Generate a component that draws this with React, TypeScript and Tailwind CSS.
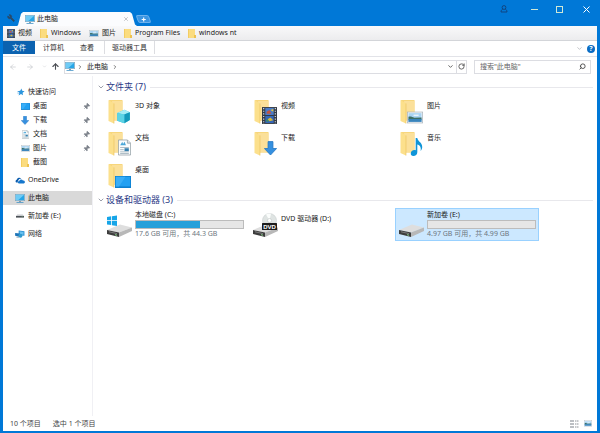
import type { ReactNode } from 'react';
import { ArrowLeft, ArrowRight, ArrowUp, ChevronDown, ChevronRight, Pin, RotateCw, Search, Wrench, X } from 'lucide-react';

type IconProps = { className?: string };

function MonitorIcon({ className }: IconProps) {
  return (
    <svg viewBox="0 0 20 18" className={className} aria-hidden="true">
      <rect x="0.5" y="0.5" width="19" height="13" fill="#d7e6ee" stroke="#7f97a6" />
      <rect x="1.5" y="1.5" width="17" height="11" fill="#27a5e6" />
      <path d="M1.5 1.5h17L6 12.5H1.5z" fill="#6fcbf5" />
      <path d="M8 14h4v2H8z" fill="#8a9ba6" />
      <path d="M3 16h14v1.5H3z" fill="#3c8fc4" />
    </svg>
  );
}

function SmallFolderIcon({ className }: IconProps) {
  return (
    <svg viewBox="0 0 16 18" className={className} aria-hidden="true">
      <path d="M0 0h14v13l2 2v3H0z" fill="#fbdc7f" />
      <path d="M0 0h2v18H0z" fill="#f3cd63" />
      <path d="M12 12h4v6h-4z" fill="#edc250" />
    </svg>
  );
}

function FilmIcon({ className }: IconProps) {
  return (
    <svg viewBox="0 0 16 18" className={className} aria-hidden="true">
      <path d="M0 0h16v18H0z" fill="#343b45" />
      <path d="M3.5 1h9v7.5h-9z" fill="#4a7cc9" />
      <path d="M3.5 9.5h9V17h-9z" fill="#3566b8" />
      <path d="M5 5l3-2 2 4H5z" fill="#c2543f" />
      <path d="M9 3l3-1v3z" fill="#e2c33a" />
      <path d="M6 13l3-2 3 3-4 1z" fill="#d7b83b" />
      <path d="M4 15l2-3 1 4z" fill="#3f8f5a" />
      <path d="M1.8 1v17M14.2 1v17" stroke="#dfe4ea" strokeWidth="1.2" strokeDasharray="1.3 1.5" />
    </svg>
  );
}

function PictureIcon({ className }: IconProps) {
  return (
    <svg viewBox="0 0 22 16" className={className} aria-hidden="true">
      <rect x="0.5" y="0.5" width="21" height="15" fill="#f7fafc" stroke="#a9b4bc" />
      <path d="M2 2h18v12H2z" fill="#a9d3f2" />
      <path d="M2 7c3-1 5 0 8 1.500l10-.5v3H2z" fill="#3d6f63" />
      <path d="M2 10h18v4H2z" fill="#3984bb" />
      <path d="M9 4h7v2H9z" fill="#e9f4fb" />
    </svg>
  );
}

function DocumentIcon({ className }: IconProps) {
  return (
    <svg viewBox="0 0 18 22" className={className} aria-hidden="true">
      <path d="M0.6.6h12.5l4.3 4.3v16.5H.6z" fill="#fafcfd" stroke="#8b989f" />
      <path d="M13 .6V5h4.4" fill="#dde4e8" stroke="#8b989f" />
      <path d="M3 8l3-5 1 3 2-3 2 5z" fill="#4aa6d8" />
      <path d="M3 11h12M3 14h5M3 17h12M3 19.3h12" stroke="#8fa4af" />
      <path d="M9 12h6v4H9z" fill="#357fae" />
    </svg>
  );
}

function DesktopIcon({ className }: IconProps) {
  return (
    <svg viewBox="0 0 20 15" className={className} aria-hidden="true">
      <path d="M0 0h20v15H0z" fill="#0c7fcf" />
      <path d="M1 1h18v12H1z" fill="#22a0f2" />
      <path d="M1 1h12L5 13H1z" fill="#3aaef7" />
    </svg>
  );
}

function DownArrowIcon({ className }: IconProps) {
  return (
    <svg viewBox="0 0 16 18" className={className} aria-hidden="true">
      <path d="M5 .5h6V9h4.5L8 17 .5 9H5z" fill="#3590e0" stroke="#2578c4" />
    </svg>
  );
}

function MusicIcon({ className }: IconProps) {
  return (
    <svg viewBox="0 0 14 22" className={className} aria-hidden="true">
      <path d="M6 0h2c0 4 6 5 6 11 0 2-1 4-2 5 1-5-1-7-4-8v9c0 3-2 5-5 5-2 0-3-1-3-3 0-3 3-5 6-4z" fill="#0f95d8" />
    </svg>
  );
}

function CubeIcon({ className }: IconProps) {
  return (
    <svg viewBox="0 0 18 19" className={className} aria-hidden="true">
      <path d="M1 5l9-4 7 3v10l-7 4-9-3z" fill="#38bfd8" />
      <path d="M1 5l9-4 7 3-7 3z" fill="#a5ecf5" />
      <path d="M10 7l7-3v10l-7 4z" fill="#1499ba" />
      <path d="M1 5l9 2v11l-9-3z" fill="#5cd3e5" />
    </svg>
  );
}

function StarIcon({ className }: IconProps) {
  return (
    <svg viewBox="0 0 20 20" className={className} aria-hidden="true">
      <path d="M11 1l2 6 6 1-5 4 1 6-5-3-6 4 2-7-5-4 7-1z" fill="#2b95dd" />
      <path d="M0 10h4M1 14h4" stroke="#7dbcec" strokeWidth="1.4" />
    </svg>
  );
}

function CloudIcon({ className }: IconProps) {
  return (
    <svg viewBox="0 0 24 16" className={className} aria-hidden="true">
      <path d="M3 13a4 4 0 0 1 1-7 6 6 0 0 1 11-2 5 5 0 0 0-7 4 4 4 0 0 0-1 5z" fill="#0b5cad" />
      <path d="M10 15a3 3 0 0 1 0-6 5 5 0 0 1 9-1 3.6 3.6 0 0 1 2 7z" fill="#1576cc" />
    </svg>
  );
}

function NetworkIcon({ className }: IconProps) {
  return (
    <svg viewBox="0 0 22 18" className={className} aria-hidden="true">
      <path d="M8 1l13 2v10L8 12z" fill="#2a8fd3" />
      <path d="M10 3l9 1.500v6L10 10z" fill="#6ac1ef" />
      <path d="M0 7l11 1v7L0 13z" fill="#1d74b8" />
      <circle cx="12" cy="13" r="4.500" fill="#2f9bcf" />
      <path d="M3 16h6" stroke="#51718a" strokeWidth="1.5" />
    </svg>
  );
}

function FlatDriveIcon({ className }: IconProps) {
  return (
    <svg viewBox="0 0 20 10" className={className} aria-hidden="true">
      <path d="M3 1h14l3 4H0z" fill="#c9cccf" />
      <path d="M0 5h20v4H0z" fill="#4b5056" />
      <path d="M14 6.5h3" stroke="#8fe08a" />
    </svg>
  );
}

function DriveIcon({ className, children }: IconProps & { children?: ReactNode }) {
  return (
    <svg viewBox="0 0 25 24" className={className} aria-hidden="true">
      <path d="M0 17l13-5.500 12 3L12 19.500z" fill="#dedede" />
      <path d="M12 19.500l13-5V18l-13 6z" fill="#b8b8b8" />
      <path d="M0 17l12 2.500V24L0 21z" fill="#3d3d3d" />
      <path d="M2 18.800l8 1.800" stroke="#7b7b7b" />
      <path d="M8 21.700l2 .5" stroke="#8ad48a" />
      {children}
    </svg>
  );
}

function WindowsDriveIcon({ className }: IconProps) {
  return (
    <DriveIcon className={className}>
      <path d="M0 4l4.200-.7v4H0zM5 3.200l5-.7v4.800H5zM0 8.100h4.200v4L0 11.500zM5 8.100h5v4.900l-5-.7z" fill="#16a5e8" />
    </DriveIcon>
  );
}

function DvdDriveIcon({ className }: IconProps) {
  return (
    <DriveIcon className={className}>
      <circle cx="16.500" cy="7.500" r="7" fill="#dfe4e3" stroke="#c3c9c8" strokeWidth="0.500" />
      <path d="M16.500 7.500L13 1.500a7 7 0 0 1 5-.8z" fill="#fbfdfc" />
      <circle cx="16.500" cy="7.500" r="2" fill="#fff" stroke="#b5bbba" strokeWidth="0.500" />
      <rect x="9" y="10" width="15" height="7" rx="0.500" fill="#1c1c1c" />
      <text x="16.500" y="15.700" textAnchor="middle" fontSize="6" fontWeight="700" fill="#fff" fontFamily="Liberation Sans, sans-serif">
        DVD
      </text>
    </DriveIcon>
  );
}

function FolderIcon({ children }: { children: ReactNode }) {
  return (
    <span className="relative h-6 w-6 shrink-0">
      <svg viewBox="0 0 24 24" className="h-6 w-6" aria-hidden="true">
        <path d="M2 0h13.500v20.500H4z" fill="#f7d67c" />
        <path d="M5 1h10.500v19.500H6z" fill="#fbe09a" />
        <path d="M1.500 0l5.500 3.500V23.500L1.500 21z" fill="#fce08c" />
        <path d="M7 3.500V23.500" stroke="#e9bf58" strokeWidth="0.600" />
      </svg>
      {children}
    </span>
  );
}

const bookmarks = [
  { name: '视频', icon: <FilmIcon className="h-[9px] w-2" /> },
  { name: 'Windows', icon: <SmallFolderIcon className="h-[9px] w-2" /> },
  { name: '图片', icon: <PictureIcon className="h-[7px] w-[10px]" /> },
  { name: 'Program Files', icon: <SmallFolderIcon className="h-[9px] w-2" /> },
  { name: 'windows nt', icon: <SmallFolderIcon className="h-[9px] w-2" /> },
];

const quickAccess = [
  { name: '桌面', pinned: true, icon: <DesktopIcon className="h-[7px] w-[9px]" /> },
  { name: '下载', pinned: true, icon: <DownArrowIcon className="h-[9px] w-2" /> },
  { name: '文档', pinned: true, icon: <DocumentIcon className="h-[9px] w-[7px]" /> },
  { name: '图片', pinned: true, icon: <PictureIcon className="h-[7px] w-[9px]" /> },
  { name: '截图', pinned: false, icon: <SmallFolderIcon className="h-[9px] w-2" /> },
];

const places = [
  { name: 'OneDrive', active: false, icon: <CloudIcon className="h-[7px] w-[10px]" /> },
  { name: '此电脑', active: true, icon: <MonitorIcon className="h-[9px] w-[10px]" /> },
  { name: '新加卷 (E:)', active: false, icon: <FlatDriveIcon className="h-1 w-2" /> },
  { name: '网络', active: false, icon: <NetworkIcon className="h-2 w-[10px]" /> },
];

const folders = [
  { name: '3D 对象', icon: <CubeIcon className="absolute right-0 bottom-0 h-[15px] w-[15px]" /> },
  { name: '视频', icon: <FilmIcon className="absolute right-0 bottom-0 h-[17px] w-[15px]" /> },
  { name: '图片', icon: <PictureIcon className="absolute right-0 bottom-0 h-[13px] w-4" /> },
  { name: '文档', icon: <DocumentIcon className="absolute right-0 bottom-0 h-[17px] w-[13px]" /> },
  { name: '下载', icon: <DownArrowIcon className="absolute right-0 bottom-0 h-[15px] w-[13px]" /> },
  { name: '音乐', icon: <MusicIcon className="absolute right-0 bottom-0 h-[18px] w-[13px]" /> },
  { name: '桌面', icon: <DesktopIcon className="absolute right-0 bottom-0 h-3 w-4" /> },
];

const drives = [
  { name: '本地磁盘 (C:)', used: 60, detail: '17.6 GB 可用，共 44.3 GB', icon: <WindowsDriveIcon className="h-6 w-[25px]" /> },
  { name: 'DVD 驱动器 (D:)', icon: <DvdDriveIcon className="h-6 w-[25px]" /> },
  { name: '新加卷 (E:)', used: 0, detail: '4.97 GB 可用，共 4.99 GB', selected: true, icon: <DriveIcon className="h-6 w-[25px]" /> },
];

function SectionHeader({ title }: { title: string }) {
  return (
    <h2 className="flex h-3 items-center text-[9px] leading-3 text-[#2b3a86]">
      <ChevronDown className="mr-[1px] h-2 w-2 text-[#6b7080]" />
      {title}
      <span className="ml-1 h-px flex-1 bg-[#e8e8ec]" />
    </h2>
  );
}

function TitleBar() {
  return (
    <header className="flex h-[26px] shrink-0 items-end pl-1">
      <button type="button" aria-label="设置" className="mb-1 h-2 w-2 text-[#2b4a68]">
        <Wrench className="h-2 w-2 -scale-x-100" fill="currentColor" />
      </button>
      <div className="ml-[2px] flex h-[14px] w-[120px] items-center bg-[#fbfcfe] pr-2 pl-2 [clip-path:polygon(0_100%,1px_94%,4px_12%,6px_0,113px_0,115px_12%,118px_90%,100%_100%)]">
        <MonitorIcon className="h-[9px] w-[10px]" />
        <span className="ml-[2px] flex-1">此电脑</span>
        <button type="button" aria-label="关闭标签页">
          <X className="h-[6px] w-[6px] text-[#8c8f94]" />
        </button>
      </div>
      <button
        type="button"
        aria-label="新标签页"
        className="mb-[3px] flex h-2 w-[13px] skew-x-[20deg] items-center justify-center rounded-[2px] border border-[#6db1ec] bg-[#3b95e2] text-white"
      >
        <svg viewBox="0 0 6 6" className="h-[5px] w-[5px] skew-x-[-20deg]" aria-hidden="true">
          <path d="M3 .5v5M.5 3h5" stroke="currentColor" strokeWidth="1.400" />
        </svg>
      </button>
      <div className="mr-[7px] mb-[13px] ml-auto flex items-center text-[#cfe8d6]">
        <button type="button" aria-label="用户" className="mr-[23px] text-[#123f78]">
          <svg viewBox="0 0 16 16" className="h-2 w-2" fill="none" stroke="currentColor" strokeWidth="1.800" aria-hidden="true">
            <circle cx="8" cy="5" r="3.800" />
            <path d="M5.500 8C3 9.500 2 11.500 2 14h12c0-2.500-1-4.500-3.500-6" />
          </svg>
        </button>
        <button type="button" aria-label="最小化" className="mr-[18px]">
          <svg viewBox="0 0 7 7" className="h-[7px] w-[7px]" aria-hidden="true">
            <path d="M0 3.500h7" stroke="currentColor" />
          </svg>
        </button>
        <button type="button" aria-label="最大化" className="mr-5">
          <svg viewBox="0 0 7 7" className="h-[7px] w-[7px]" aria-hidden="true">
            <rect x="0.500" y="0.500" width="6" height="6" fill="none" stroke="currentColor" />
          </svg>
        </button>
        <button type="button" aria-label="关闭" className="text-white">
          <svg viewBox="0 0 7 7" className="h-[7px] w-[7px]" aria-hidden="true">
            <path d="M.5.5l6 6M6.500.5l-6 6" stroke="currentColor" />
          </svg>
        </button>
      </div>
    </header>
  );
}

function Ribbon() {
  return (
    <nav className="flex h-4 shrink-0 items-start border-b border-[#e2e3e8] text-[#333]">
      <button type="button" className="h-[13px] w-8 bg-[#0b62b0] text-white">
        文件
      </button>
      <button type="button" className="ml-2 h-[13px]">
        计算机
      </button>
      <button type="button" className="ml-4 h-[13px]">
        查看
      </button>
      <button type="button" className="ml-[10px] h-[13px] border-x border-[#dcdde1] px-[7px]">
        驱动器工具
      </button>
      <span className="mr-[2px] ml-auto flex h-[15px] items-center gap-1">
        <button type="button" aria-label="展开功能区">
          <ChevronDown className="h-[7px] w-[7px] text-[#9a9da3]" />
        </button>
        <button type="button" aria-label="帮助" className="h-2 w-2 rounded-full bg-[#0b6dc4] text-center text-[7px] leading-2 font-bold text-white">
          ?
        </button>
      </span>
    </nav>
  );
}

function AddressRow() {
  return (
    <div className="flex h-[19px] shrink-0 items-center pr-[6px] pl-[6px] text-[#c3c5ca]">
      <button type="button" aria-label="后退">
        <ArrowLeft className="h-2 w-2" />
      </button>
      <button type="button" aria-label="前进" className="ml-[9px]">
        <ArrowRight className="h-2 w-2" />
      </button>
      <button type="button" aria-label="历史记录" className="ml-2">
        <ChevronDown className="h-[5px] w-[5px]" />
      </button>
      <button type="button" aria-label="向上" className="ml-1 text-[#4c4f55]">
        <ArrowUp className="h-[9px] w-[9px]" strokeWidth={3} />
      </button>
      <div className="ml-1 flex h-[14px] flex-1 items-center border border-[#dcdde2] text-[#555]">
        <MonitorIcon className="h-[9px] w-[10px]" />
        <ChevronRight className="ml-[2px] h-[6px] w-[6px]" strokeWidth={3} />
        <button type="button" className="ml-1 text-[#222]">
          此电脑
        </button>
        <ChevronRight className="ml-1 h-[6px] w-[6px]" strokeWidth={3} />
        <button type="button" aria-label="以前的位置" className="mr-[2px] ml-auto">
          <ChevronDown className="h-[7px] w-[7px]" strokeWidth={3} />
        </button>
        <button type="button" aria-label="刷新" className="flex h-3 w-[10px] items-center justify-center border-l border-[#dcdde2]">
          <RotateCw className="h-[7px] w-[7px]" strokeWidth={3} />
        </button>
      </div>
      <label className="ml-[7px] flex h-[14px] w-[117px] items-center border border-[#dcdde2] pr-1 pl-[5px]">
        <input
          type="search"
          aria-label="搜索此电脑"
          placeholder={'搜索"此电脑"'}
          className="w-full min-w-0 flex-1 outline-none placeholder:text-[#666]"
        />
        <Search className="h-[7px] w-[7px] -scale-x-100 text-[#444]" strokeWidth={3} />
      </label>
    </div>
  );
}

function Sidebar() {
  return (
    <aside className="flex w-[90px] shrink-0 flex-col gap-1 border-r border-[#f0f0f4] pt-[9px] leading-[14px]">
      <ul>
        <li>
          <a href="#quick" className="flex h-[14px] items-center pl-[14px]">
            <StarIcon className="mr-[3px] h-2 w-2" />
            快速访问
          </a>
        </li>
        {quickAccess.map((item) => (
          <li key={item.name}>
            <a href="#quick" className="flex h-[14px] items-center pr-[2px] pl-[17px]">
              <span className="mr-[3px] flex w-[10px] justify-center">{item.icon}</span>
              <span className="flex-1">{item.name}</span>
              {item.pinned && <Pin className="h-[7px] w-[7px] rotate-45 text-[#7d838c]" fill="currentColor" />}
            </a>
          </li>
        ))}
      </ul>
      {places.map((place) => (
        <a
          key={place.name}
          href="#place"
          className={`flex h-[14px] items-center pl-3 ${place.active ? 'bg-[#d9d9d9]' : ''}`}
        >
          <span className="mr-[3px] flex w-[10px] justify-center">{place.icon}</span>
          {place.name}
        </a>
      ))}
    </aside>
  );
}

export default function App() {
  return (
    <div className="flex min-h-screen flex-col bg-[#0078d7] px-[3px] pb-[2px] font-['Noto_Sans','Noto_Sans_CJK_SC',sans-serif] text-[7px] leading-[10px] text-[#1a1a1a]">
      <TitleBar />
      <div className="flex flex-1 flex-col bg-white">
        <div className="flex h-[15px] shrink-0 items-center gap-2 border-b border-[#d3d5d9] bg-linear-to-b from-[#f9f9fa] to-[#ececee] pl-1">
          {bookmarks.map((bookmark) => (
            <button key={bookmark.name} type="button" className="flex items-center gap-[3px]">
              {bookmark.icon}
              {bookmark.name}
            </button>
          ))}
        </div>
        <Ribbon />
        <AddressRow />

        <div className="flex flex-1">
          <Sidebar />
          <main className="min-w-0 flex-1 pt-[5px] pr-1 pl-1">
            <SectionHeader title="文件夹 (7)" />
            <ul className="mt-[3px] grid grid-cols-[repeat(3,144px)] gap-x-[2px] pl-[6px]">
              {folders.map((folder) => (
                <li key={folder.name} className="flex h-8 items-start gap-1 pt-1 pl-1">
                  <FolderIcon>{folder.icon}</FolderIcon>
                  <span className="pt-px">{folder.name}</span>
                </li>
              ))}
            </ul>

            <div className="pt-[2px]">
              <SectionHeader title="设备和驱动器 (3)" />
            </div>
            <ul className="mt-[2px] grid grid-cols-[repeat(3,144px)] gap-x-[2px] pl-[6px]">
              {drives.map((drive) => (
                <li
                  key={drive.name}
                  className={`flex h-[33px] gap-[3px] border pr-[2px] pl-[3px] ${
                    drive.selected ? 'border-[#99d1ff] bg-[#cce8ff]' : 'border-transparent'
                  }`}
                >
                  <span className="mt-1 shrink-0">{drive.icon}</span>
                  <div className="min-w-0 flex-1 pt-px">
                    {drive.used === undefined ? (
                      <p className="pt-1">{drive.name}</p>
                    ) : (
                      <>
                        <p>{drive.name}</p>
                        <div
                          role="meter"
                          aria-label={drive.name}
                          aria-valuenow={drive.used}
                          className="h-[9px] border border-[#bcbcbc] bg-[#e6e6e6]"
                        >
                          <div className="h-full bg-[#26a0da]" style={{ width: `${drive.used}%` }} />
                        </div>
                        <p className="text-[#6d7780]">{drive.detail}</p>
                      </>
                    )}
                  </div>
                </li>
              ))}
            </ul>
          </main>
        </div>

        <footer className="flex h-[15px] shrink-0 items-center pr-[5px] pl-[7px] text-[#444]">
          <span>10 个项目</span>
          <span className="ml-3">选中 1 个项目</span>
          <span className="ml-auto flex items-center gap-1">
            <button type="button" aria-label="详细信息">
              <svg viewBox="0 0 10 8" className="h-2 w-[10px]" aria-hidden="true">
                <path d="M0 1h4M0 4h4M0 7h4" stroke="#a7abb0" strokeWidth="1.500" />
                <path d="M5 1h4M5 4h4M5 7h4" stroke="#8c9096" strokeDasharray="1.500 .5" />
              </svg>
            </button>
            <button type="button" aria-label="大图标">
              <PictureIcon className="h-[7px] w-2" />
            </button>
          </span>
        </footer>
      </div>
    </div>
  );
}
